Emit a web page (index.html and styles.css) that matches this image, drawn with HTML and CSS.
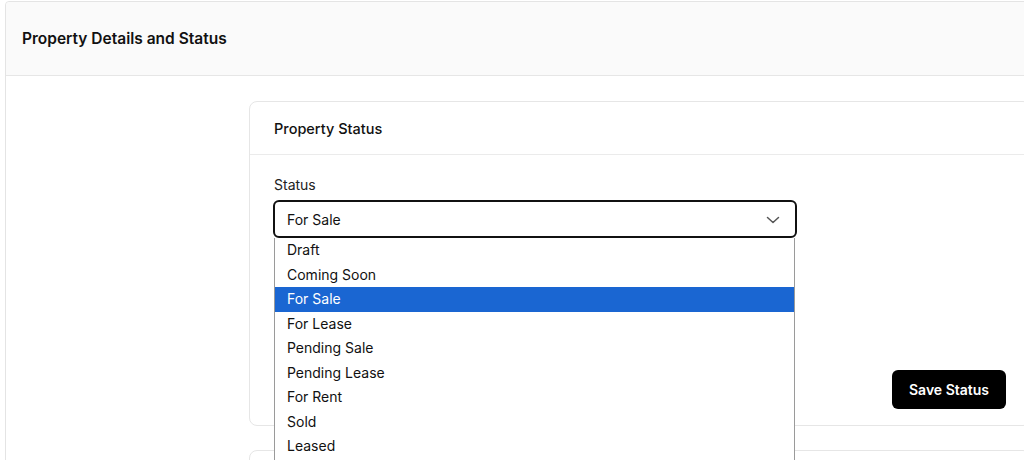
FILE: index.html
```html
<!DOCTYPE html>
<html lang="en">
<head>
<meta charset="utf-8">
<title>Property Details and Status</title>
<link rel="stylesheet" href="styles.css">
</head>
<body>
<div class="page">
  <section class="panel">
    <header class="panel-head">
      <h1 class="panel-title">Property Details and Status</h1>
    </header>
    <div class="panel-body">
      <aside class="side"></aside>
      <div class="main">
        <div class="card">
          <div class="card-head">Property Status</div>
          <div class="card-body">
            <div class="field">
              <label class="label">Status</label>
              <div class="select-wrap">
                <div class="select">
                  <span class="select-value">For Sale</span>
                  <svg class="chevron" width="14" height="8" viewBox="0 0 14 8" aria-hidden="true">
                    <path d="M1.5 1.5 L7 6.5 L12.5 1.5" fill="none" stroke="#555" stroke-width="1.5" stroke-linecap="round" stroke-linejoin="round"/>
                  </svg>
                </div>
                <ul class="options">
                  <li class="option">Draft</li>
                  <li class="option">Coming Soon</li>
                  <li class="option selected">For Sale</li>
                  <li class="option">For Lease</li>
                  <li class="option">Pending Sale</li>
                  <li class="option">Pending Lease</li>
                  <li class="option">For Rent</li>
                  <li class="option">Sold</li>
                  <li class="option">Leased</li>
                </ul>
              </div>
            </div>
            <div class="card-foot">
              <button class="btn">Save Status</button>
            </div>
          </div>
        </div>
        <div class="card card-next"></div>
      </div>
    </div>
  </section>
</div>
</body>
</html>
```

FILE: styles.css
```css
* { box-sizing: border-box; }
html, body { margin: 0; padding: 0; }
body {
  background: #ffffff;
  font-family: Inter, "Noto Sans", sans-serif;
  color: #111111;
  overflow: hidden;
  height: 460px;
}
.page { padding: 1px 0 0 5px; }
.panel {
  width: 1051px;
  border: 1px solid #e4e4e4;
  border-radius: 4px;
  background: #ffffff;
}
.panel-head {
  height: 74px;
  background: #fafafa;
  border-bottom: 1px solid #e6e6e6;
  padding: 0 16px;
  display: flex;
  align-items: center;
  border-radius: 4px 4px 0 0;
}
.panel-title {
  margin: 0;
  font-size: 15.5px;
  font-weight: 600;
  color: #111;
}
.panel-body {
  display: grid;
  grid-template-columns: 219px 1fr;
  padding: 25px 24px 0 24px;
}
.main {
  display: flex;
  flex-direction: column;
  gap: 24px;
}
.card {
  border: 1px solid #e6e6e6;
  border-radius: 8px;
  background: #fff;
}
.card-next { height: 60px; }
.card-head {
  height: 53px;
  padding: 0 24px;
  border-bottom: 1px solid #ebebeb;
  display: flex;
  align-items: center;
  font-size: 14.5px;
  font-weight: 500;
  color: #111;
}
.card-body {
  padding: 21px 24px 16px 23px;
}
.field {
  width: 524px;
  display: flex;
  flex-direction: column;
  gap: 6px;
}
.label {
  font-size: 14px;
  line-height: 18px;
  color: #222;
  padding-left: 1px;
}
.select-wrap { position: relative; }
.select {
  height: 38px;
  border: 2px solid #111;
  border-radius: 6px;
  padding: 1px 15px 0 12px;
  display: flex;
  align-items: center;
  justify-content: space-between;
  font-size: 14px;
  color: #111;
  background: #fff;
}
.chevron { display: block; }
.options {
  position: absolute;
  top: 100%;
  left: 1px;
  width: 521px;
  margin: 0;
  padding: 0 0 8px;
  list-style: none;
  background: #fff;
  border: 1px solid #9a9a9a;
  border-top: none;
  z-index: 10;
}
.option {
  height: 24.5px;
  line-height: 24.5px;
  padding-left: 12px;
  font-size: 14px;
  color: #111;
}
.option.selected {
  background: #1a66d2;
  color: #ffffff;
}
.card-foot {
  margin-top: 132px;
  display: flex;
  justify-content: flex-end;
}
.btn {
  height: 39px;
  width: 114px;
  border: none;
  border-radius: 6px;
  background: #000;
  color: #fff;
  font-family: Inter, "Noto Sans", sans-serif;
  font-size: 14px;
  font-weight: 600;
  cursor: pointer;
}
```
